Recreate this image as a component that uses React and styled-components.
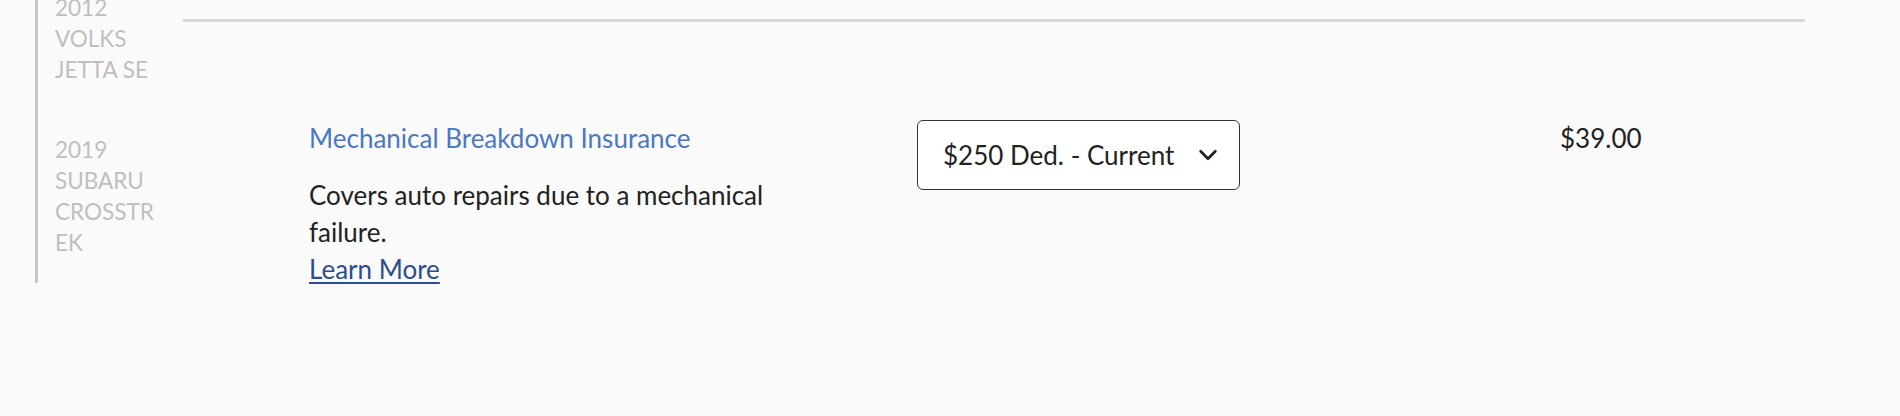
import styled, { createGlobalStyle } from 'styled-components';

const GlobalStyle = createGlobalStyle`
  html, body {
    margin: 0;
    padding: 0;
    background: #fafafa;
    font-family: Lato, "Open Sans", sans-serif;
    overflow: hidden;
  }
`;

const Page = styled.div`
  display: flex;
  align-items: flex-start;
  padding-left: 35px;
  margin-top: -8px;
  height: 424px;
`;

const VehicleList = styled.ul`
  list-style: none;
  margin: 0;
  padding: 0 0 25px 17px;
  width: 128px;
  border-left: 3px solid #c6c6c6;
  display: flex;
  flex-direction: column;
  gap: 49px;
`;

const Vehicle = styled.li`
  width: 106px;
  font-size: 22.5px;
  line-height: 31px;
  color: #bfbfbf;
  text-transform: uppercase;
  overflow-wrap: anywhere;
`;

const Coverages = styled.div`
  flex: 1;
  max-width: 1622px;
  padding-top: 27px;
`;

const Divider = styled.hr`
  margin: 0;
  border: none;
  height: 3px;
  background: #d9d9d9;
`;

const CoverageRow = styled.div`
  display: grid;
  grid-template-columns: 608px 643px 1fr;
  padding: 98px 0 0 126px;
  align-items: start;
`;

const Details = styled.div`
  display: flex;
  flex-direction: column;
`;

const CoverageTitle = styled.a`
  font-size: 26px;
  line-height: 36px;
  color: #4a78c2;
  text-decoration: none;
`;

const Description = styled.p`
  margin: 21px 0 0;
  width: 480px;
  font-size: 26px;
  line-height: 37px;
  color: #222;
`;

const LearnMore = styled.a`
  display: block;
  color: #2c4d8e;
  text-decoration: underline;
  text-underline-offset: 3px;
  text-decoration-thickness: 2px;
`;

const Select = styled.button`
  display: flex;
  align-items: center;
  justify-content: space-between;
  width: 323px;
  height: 70px;
  box-sizing: border-box;
  padding: 0 20px 0 25px;
  background: #fff;
  border: 1.5px solid #333;
  border-radius: 6px;
  font-family: Lato, "Open Sans", sans-serif;
  font-size: 26px;
  color: #222;
  cursor: pointer;
`;

const Price = styled.div`
  font-size: 26px;
  line-height: 36px;
  color: #222;
`;

const Chevron = () => (
  <svg width="22" height="22" viewBox="0 0 24 24" fill="none">
    <polyline
      points="4,8 12,16 20,8"
      stroke="#222"
      strokeWidth="3"
      strokeLinecap="round"
      strokeLinejoin="round"
    />
  </svg>
);

const vehicles = ['2012 Volks Jetta SE', '2019 Subaru Crosstrek'];

export default function App() {
  return (
    <>
      <GlobalStyle />
      <Page>
        <VehicleList>
          {vehicles.map(v => (
            <Vehicle key={v}>{v}</Vehicle>
          ))}
        </VehicleList>
        <Coverages>
          <Divider />
          <CoverageRow>
            <Details>
              <CoverageTitle href="#">Mechanical Breakdown Insurance</CoverageTitle>
              <Description>
                Covers auto repairs due to a mechanical failure.
                <LearnMore href="#">Learn More</LearnMore>
              </Description>
            </Details>
            <div>
              <Select type="button">
                <span>$250 Ded. - Current</span>
                <Chevron />
              </Select>
            </div>
            <Price>$39.00</Price>
          </CoverageRow>
        </Coverages>
      </Page>
    </>
  );
}
